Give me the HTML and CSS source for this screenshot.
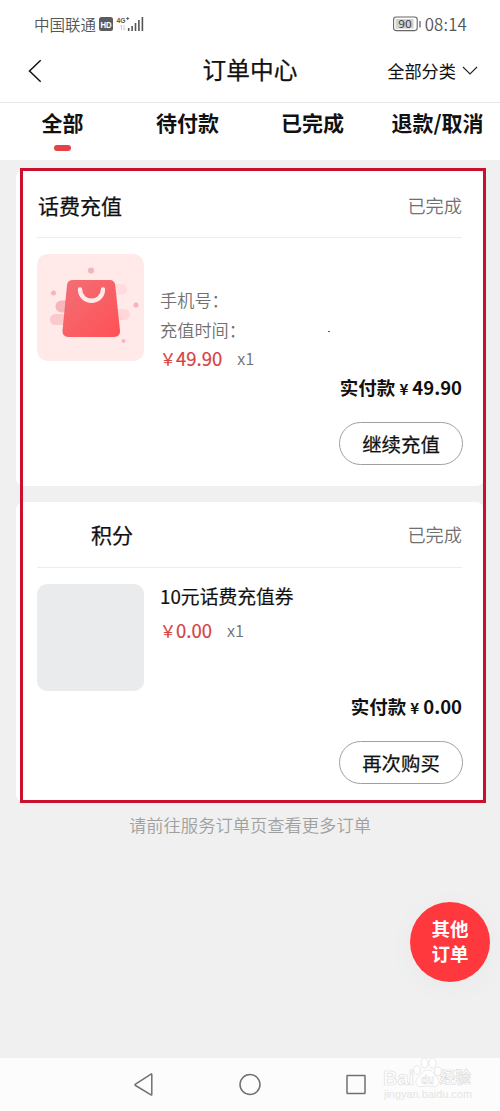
FILE: index.html
```html
<!DOCTYPE html>
<html lang="zh-CN">
<head>
<meta charset="utf-8">
<title>订单中心</title>
<link rel="stylesheet" href="styles.css">
</head>
<body>
<div class="screen">
  <div class="status-bar">
    <span class="carrier">中国联通</span>
    <svg class="signals" width="46" height="20" viewBox="0 0 46 20">
      <rect x="0" y="3" width="14" height="14" rx="2.5" fill="#5c5c5c"/>
      <text class="hd" x="1.5" y="13.500" textLength="11.2" lengthAdjust="spacingAndGlyphs">HD</text>
      <text class="net" x="17.500" y="9" textLength="9" lengthAdjust="spacingAndGlyphs">4G</text>
      <path d="M27.200 4.500h3M28.700 3v3" stroke="#555" stroke-width=".9"/>
      <path d="M22.500 16v-5l-1.200 1.500M25 11v5l1.200-1.500" fill="none" stroke="#bbb" stroke-width=".7"/>
      <path d="M29.700 17v-3M33.100 17v-5M36.500 17v-8M39.900 17V6M43.400 17V3" stroke="#555" stroke-width="1.600"/>
    </svg>
    <svg class="battery" width="30" height="18" viewBox="0 0 30 18">
      <rect x=".6" y="2" width="23.600" height="13.600" rx="2.500" fill="#fff" stroke="#666" stroke-width="1.100"/>
      <rect x="2.600" y="4" width="18" height="9.600" fill="#d2d2d2"/>
      <path d="M27 6v6.500" stroke="#666" stroke-width="1.300"/>
      <text class="level" x="5.300" y="12.900" textLength="13.500" lengthAdjust="spacingAndGlyphs">90</text>
    </svg>
    <span class="clock">08:14</span>
  </div>

  <header class="nav">
    <svg class="back" width="16" height="24" viewBox="0 0 16 24"><path d="M12.700 1.300L1.500 12l11.200 10.700" fill="none" stroke="#111" stroke-width="1.500"/></svg>
    <h1 class="nav-title">订单中心</h1>
    <div class="filter">全部分类<svg width="16" height="10" viewBox="0 0 16 10"><path d="M1 1l7 7 7-7" fill="none" stroke="#222" stroke-width="1.100"/></svg></div>
  </header>

  <nav class="tabs">
    <div class="tab active">全部</div>
    <div class="tab">待付款</div>
    <div class="tab">已完成</div>
    <div class="tab">退款/取消</div>
  </nav>

  <main class="orders">
    <section class="card">
      <div class="card-head"><h2>话费充值</h2><span class="state">已完成</span></div>
      <div class="card-body">
        <svg class="thumb" width="107" height="107" viewBox="0 0 107 107">
          <defs><linearGradient id="bag" x1="0" y1="0" x2="1" y2="1"><stop offset="0" stop-color="#f17076"/><stop offset="1" stop-color="#ff5056"/></linearGradient></defs>
          <rect width="107" height="107" rx="10" fill="#ffe9e9"/>
          <g fill="#fbc8cb">
            <rect x="18.500" y="46.500" width="20" height="12" rx="6" fill="#f8b5ba"/>
            <rect x="13" y="60" width="24" height="11" rx="5.500"/>
            <rect x="68" y="30" width="22" height="11" rx="5.500" fill="#ffdcdd"/>
            <rect x="68" y="55" width="25" height="11" rx="5.500" fill="#ffd7d9"/>
          </g>
          <g fill="#f5b6bb"><circle cx="54" cy="16.500" r="3.100"/><circle cx="16.500" cy="39" r="2.500"/><circle cx="99" cy="51" r="2.600"/><circle cx="86.500" cy="87" r="1.900"/></g>
          <path d="M36 26h36.500q5 0 5.700 5L83 76.500q.5 6.500-6 6.500H31.500q-6.500 0-6-6.500L30 31q.7-5 6-5z" fill="url(#bag)"/>
          <path d="M43 35.500c.5 15 22.500 15 23 0" fill="none" stroke="#ffe9e9" stroke-width="4.400" stroke-linecap="round"/>
        </svg>
        <div class="info">
          <p class="meta first">手机号：</p>
          <p class="meta time"><span>充值时间：</span><i class="speck"></i></p>
          <p class="price-row"><span class="yen">￥</span><span class="price">49.90</span><span class="qty">x1</span></p>
        </div>
      </div>
      <p class="paid">实付款<span class="paid-yen">¥</span>49.90</p>
      <button class="action">继续充值</button>
    </section>

    <section class="card second">
      <div class="card-head"><h2 class="points">积分</h2><span class="state">已完成</span></div>
      <div class="card-body">
        <div class="thumb blank"></div>
        <div class="info">
          <p class="product">10元话费充值券</p>
          <p class="price-row"><span class="yen">￥</span><span class="price">0.00</span><span class="qty">x1</span></p>
        </div>
      </div>
      <p class="paid">实付款<span class="paid-yen">¥</span>0.00</p>
      <button class="action">再次购买</button>
    </section>
    <p class="more">请前往服务订单页查看更多订单</p>
  </main>

  <footer class="system-nav">
    <svg width="20" height="24" viewBox="0 0 20 24"><path d="M17.800 2.500v20q0 .8-.8.400L1.500 13.500q-1-.7 0-1.400L17 2.100q.8-.4.800.400z" fill="none" stroke="#707070" stroke-width="1.500"/></svg>
    <svg width="24" height="24" viewBox="0 0 24 24"><circle cx="12" cy="12.500" r="10" fill="none" stroke="#707070" stroke-width="1.500"/></svg>
    <svg class="recent" width="22" height="24" viewBox="0 0 22 24"><rect x="2" y="3.500" width="18" height="18" rx=".5" fill="none" stroke="#707070" stroke-width="1.500"/></svg>
  </footer>

  <div class="highlight"></div>
  <div class="fab"><span>其他</span><span>订单</span></div>
  <svg class="watermark" width="96" height="46" viewBox="0 0 96 46">
    <g fill="#fff" stroke="#dedede" stroke-width=".7">
      <ellipse cx="36" cy="14" rx="3.300" ry="4.300"/><ellipse cx="43.500" cy="7" rx="3.500" ry="5"/><ellipse cx="51.500" cy="7" rx="3.500" ry="5"/><ellipse cx="57" cy="15.500" rx="3.300" ry="4.300"/>
      <path d="M47 14c5 0 6 5 9 7.500 4 4 2 9-3 9-4 0-8-1-12 0-6 1-8-5-4-9 4-3 5-7.500 10-7.500z"/>
      <text class="wm-bai" x="2" y="28.500" textLength="31" lengthAdjust="spacingAndGlyphs">Bai</text>
      <text class="wm-du" x="40" y="28" textLength="13" lengthAdjust="spacingAndGlyphs">du</text>
      <text class="wm-exp" x="59" y="27" textLength="31" lengthAdjust="spacingAndGlyphs">经验</text>
    </g>
    <text class="wm-url" x="3" y="42" textLength="88" lengthAdjust="spacingAndGlyphs">jingyan.baidu.com</text>
  </svg>
</div>
</body>
</html>
```
FILE: styles.css
```css
* { box-sizing: border-box; }
body { margin: 0; }
h1, h2, p { margin: 0; font-weight: 400; }
svg { display: block; flex: none; }

.screen {
  position: relative;
  display: flex;
  flex-direction: column;
  width: 500px;
  height: 1111px;
  overflow: hidden;
  background: #f0f0f0;
  color: #111;
  font-family: "Noto Sans CJK SC", sans-serif;
  white-space: nowrap;
}

.status-bar {
  display: flex;
  align-items: center;
  height: 48px;
  padding: 0 33px 0 34px;
  background: #fff;
  color: #555;
}
.carrier { font-size: 15.500px; font-weight: 350; line-height: 24px; }
.signals { margin-left: 3px; }
.hd { font: bold 9.500px "Liberation Sans", sans-serif; fill: #fff; }
.net { font: bold 8px "Liberation Sans", sans-serif; fill: #555; }
.battery { margin-left: auto; }
.level { font: 10.500px "Noto Sans CJK SC", sans-serif; fill: #444; }
.clock { margin-left: 2px; font-size: 16.800px; font-weight: 350; line-height: 22px; letter-spacing: .2px; padding-bottom: 1px; }

.nav {
  display: grid;
  grid-template-columns: 100px 1fr 100px;
  align-items: center;
  height: 55px;
  padding: 0 22px 9px 28px;
  background: #fff;
  border-bottom: 1px solid #e7e7e7;
}
.nav-title { margin-left: -6px; padding-bottom: 3px; text-align: center; font-size: 23.700px; line-height: 32px; -webkit-text-stroke: .25px #111; }
.filter { display: flex; align-items: center; justify-content: flex-end; gap: 6px; font-size: 17.200px; line-height: 26px; }

.tabs {
  display: grid;
  grid-template-columns: repeat(4, 125px);
  height: 57px;
  background: #fff;
}
.tab { display: flex; flex-direction: column; align-items: center; font-size: 21px; font-weight: 700; line-height: 39px; }
.active::after { content: ""; width: 17px; height: 6px; margin-top: 3px; border-radius: 3px; background: #e64144; }

.orders { display: flex; flex-direction: column; flex: 1; padding: 10px 16px 0; }
.card {
  display: flex;
  flex-direction: column;
  height: 316px;
  padding: 0 22px;
  border-radius: 8px;
  background: #fff;
}
.second { height: 300px; margin-top: 16px; }
.card-head {
  display: flex;
  align-items: center;
  justify-content: space-between;
  height: 68px;
  margin-left: -1px;
  padding: 2px 0 0 1px;
  border-bottom: 1px solid #ededed;
}
.second .card-head { height: 66px; padding: 0 0 1px 1px; }
.card-head h2 { font-size: 21px; line-height: 30px; -webkit-text-stroke: .25px #111; }
.card-head .points { padding-left: 53px; }
.state { font-size: 18.200px; font-weight: 350; line-height: 28px; color: #707070; }
.card-body { display: flex; height: 107px; margin: 16px 0 0 -1px; gap: 16px; }
.thumb { width: 107px; height: 107px; border-radius: 10px; }
.blank { background: #eaebed; }
.info { display: flex; flex-direction: column; flex: 1; }
.meta { font-size: 17.200px; font-weight: 350; line-height: 29.500px; color: #707070; }
.first { margin-top: 31px; }
.time { display: flex; align-items: center; }
.speck { width: 2px; height: 1px; margin: 5px 0 0 82px; background: #666; }
.price-row { display: flex; align-items: center; height: 28px; color: #d6423f; -webkit-text-stroke: .2px #d6423f; }
.yen { width: 16px; font-size: 16px; line-height: 28px; }
.price { font-size: 18.500px; line-height: 28px; }
.qty { margin-left: 15px; font-size: 16.500px; font-weight: 350; line-height: 28px; color: #707070; -webkit-text-stroke: 0; }
.product { margin-top: -1px; font-size: 18.800px; line-height: 26px; -webkit-text-stroke: .2px #111; }
.second .price-row { margin-top: 7px; }
.paid { margin-top: 12px; text-align: right; font-size: 18.500px; font-weight: 700; line-height: 28px; }
.second .paid { margin-top: 1px; }
.paid-yen { display: inline-block; width: 17px; text-align: center; font-size: 15px; }
.action {
  align-self: flex-end;
  width: 124px;
  height: 43px;
  margin: 19px -1px 0 0;
  padding: 0;
  border: 1px solid #a0a0a0;
  border-radius: 22px;
  background: #fff;
  color: #111;
  font: 400 19.400px/40px "Noto Sans CJK SC", sans-serif;
  -webkit-text-stroke: .25px #111;
}
.more { margin-top: 10px; text-align: center; font-size: 17.300px; font-weight: 350; line-height: 26px; color: #a0a0a0; }

.system-nav {
  display: grid;
  grid-template-columns: repeat(3, 106.500px);
  justify-content: center;
  justify-items: center;
  height: 53px;
  margin-top: auto;
  padding-top: 14px;
  background: #fcfcfc;
}
.recent { margin-right: 2px; }

.highlight { position: absolute; left: 20px; top: 168px; width: 466px; height: 635px; border: 3px solid #c9102e; }
.fab {
  position: absolute;
  left: 410px;
  top: 902px;
  display: flex;
  flex-direction: column;
  align-items: center;
  justify-content: center;
  width: 80px;
  height: 80px;
  padding-bottom: 2px;
  border-radius: 50%;
  background: #ff383d;
  box-shadow: 0 5px 30px rgba(0, 0, 0, .03);
  color: #fff;
  font-size: 18.500px;
  font-weight: 700;
  line-height: 25px;
}
.watermark { position: absolute; left: 381px; top: 1056px; }
.wm-bai { font: bold 20px "Liberation Sans", sans-serif; }
.wm-du { font: bold 13px "Liberation Sans", sans-serif; }
.wm-exp { font: bold 15.500px "Noto Sans CJK SC", sans-serif; }
.wm-url { font: 10px "Liberation Sans", sans-serif; fill: #e5e5e5; }
```
